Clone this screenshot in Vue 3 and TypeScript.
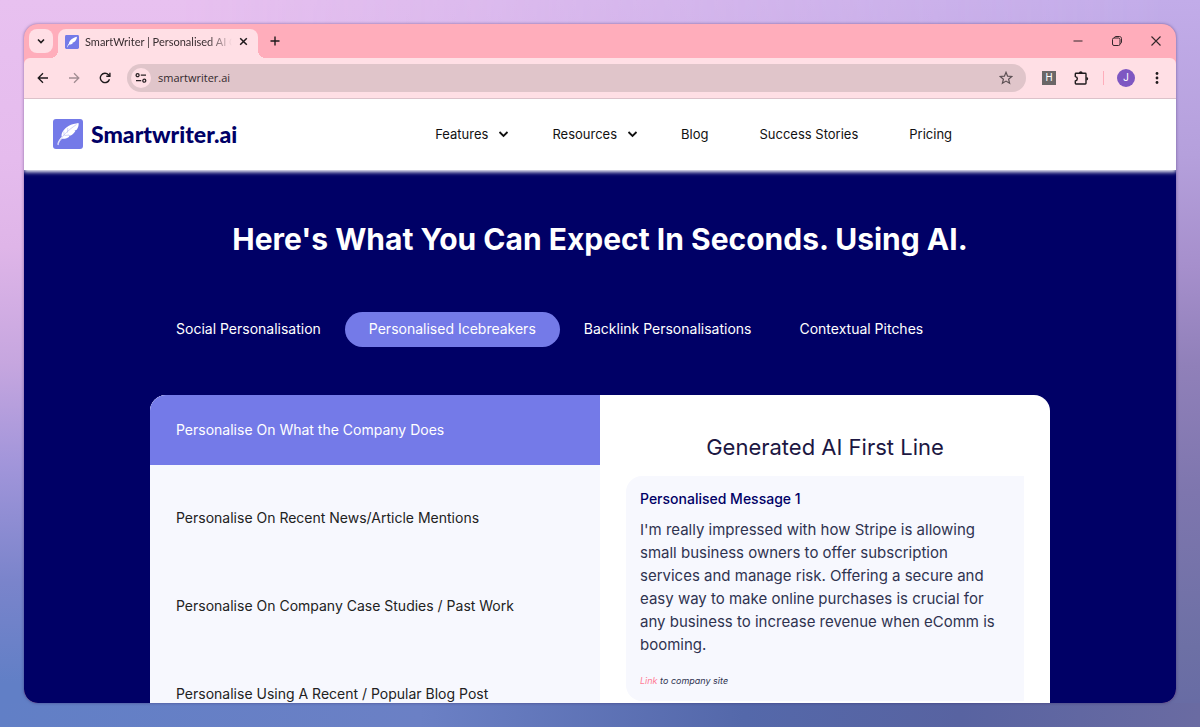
<script setup lang="ts">
import { ref } from 'vue'

interface NavItem {
  label: string
  menu: boolean
}

const address = ref('smartwriter.ai')

const navItems: NavItem[] = [
  { label: 'Features', menu: true },
  { label: 'Resources', menu: true },
  { label: 'Blog', menu: false },
  { label: 'Success Stories', menu: false },
  { label: 'Pricing', menu: false },
]

const categories: string[] = [
  'Social Personalisation',
  'Personalised Icebreakers',
  'Backlink Personalisations',
  'Contextual Pitches',
]
const activeCategory = ref(1)

const options: string[] = [
  'Personalise On What the Company Does',
  'Personalise On Recent News/Article Mentions',
  'Personalise On Company Case Studies / Past Work',
  'Personalise Using A Recent / Popular Blog Post',
]
const activeOption = ref(0)
</script>

<template>
  <div class="desktop">
    <div class="window">
      <div class="titlebar">
        <button class="tab-search" aria-label="Search tabs">
          <svg width="10" height="10" viewBox="0 0 10 10"><path d="M2 3.500l3 3 3-3" fill="none" stroke="#1f1a1c" stroke-width="1.600" /></svg>
        </button>
        <div class="browser-tab">
          <svg class="favicon" viewBox="0 0 30 30">
            <rect width="30" height="30" rx="3" fill="#747ae8" />
            <path d="M4.500 26C5 23 6.500 20 8.500 18C9 12 15 6 25.500 3.500C26 8 23 12.500 19 15.500L16 16L17 17C15 19.500 12.500 20.500 9.500 20.500C7.500 22 6 24.500 5.500 26.500Z" fill="#fff" />
          </svg>
          <span class="tab-title">SmartWriter | Personalised AI C</span>
          <button class="tab-close" aria-label="Close tab">
            <svg width="9" height="9" viewBox="0 0 9 9"><path d="M1.200 1.200l6.600 6.600M7.800 1.200L1.200 7.800" stroke="#1f1a1c" stroke-width="1.500" /></svg>
          </button>
        </div>
        <button class="new-tab" aria-label="New tab">
          <svg width="10" height="10" viewBox="0 0 10 10"><path d="M5 .5v9M.5 5h9" stroke="#1f1a1c" stroke-width="1.400" /></svg>
        </button>
        <div class="window-controls">
          <button aria-label="Minimise">
            <svg width="10" height="10" viewBox="0 0 10 10"><path d="M.5 5h9" stroke="#33262a" /></svg>
          </button>
          <button aria-label="Restore">
            <svg width="10" height="10" viewBox="0 0 10 10" fill="none" stroke="#33262a"><rect x=".5" y="2" width="7.500" height="7.500" rx="1.500" /><path d="M2.500 2V1.800C2.500 1 3 .5 3.800 .5H7.500C8.600 .5 9.500 1.400 9.500 2.500V6C9.500 7 9 7.500 8 7.500" /></svg>
          </button>
          <button aria-label="Close">
            <svg width="10" height="10" viewBox="0 0 10 10"><path d="M.5 .5l9 9M9.500 .5l-9 9" stroke="#33262a" stroke-width="1.100" /></svg>
          </button>
        </div>
      </div>

      <div class="toolbar">
        <button class="tool" aria-label="Back">
          <svg width="12" height="12" viewBox="0 0 12 12" fill="none" stroke="#1f1a1c" stroke-width="1.300"><path d="M11 6H1.500M6 1.200L1.200 6L6 10.800" /></svg>
        </button>
        <button class="tool" aria-label="Forward">
          <svg width="12" height="12" viewBox="0 0 12 12" fill="none" stroke="#a28d93" stroke-width="1.300"><path d="M1 6h9.500M6 1.200L10.800 6L6 10.800" /></svg>
        </button>
        <button class="tool" aria-label="Reload">
          <svg width="12" height="12" viewBox="0 0 12 12" fill="none" stroke="#1f1a1c" stroke-width="1.400"><path d="M10.500 7.300A4.700 4.700 0 1 1 9.500 2.800L10.700 4.200" /><path d="M10.900 .7V4.300H7.300" /></svg>
        </button>
        <div class="address">
          <button class="site-info" aria-label="Site information">
            <svg width="12" height="12" viewBox="0 0 12 12" fill="none" stroke="#2a2225" stroke-width="1.300"><circle cx="2.600" cy="3.200" r="1.500" /><path d="M5.800 3.200H11" /><circle cx="9.300" cy="8.700" r="1.500" /><path d="M1 8.700H6.200" /></svg>
          </button>
          <input v-model="address" type="text" aria-label="Address" />
          <button class="star" aria-label="Bookmark this page">
            <svg width="14" height="14" viewBox="0 0 14 14"><path d="M7 1.300L8.600 5.200L12.800 5.500L9.600 8.200L10.600 12.300L7 10.100L3.400 12.300L4.400 8.200L1.200 5.500L5.400 5.200Z" fill="none" stroke="#5c5054" stroke-width="1.200" /></svg>
          </button>
        </div>
        <button class="ext-badge" aria-label="Extension H">H</button>
        <button class="puzzle" aria-label="Extensions">
          <svg width="16" height="16" viewBox="0 0 16 16"><path d="M3 3.300H12.300Q13 3.300 13 4V13.300Q13 14 12.300 14H3Q2.300 14 2.300 13.300V11C5 10.500 5 7 2.300 6.500V4Q2.300 3.300 3 3.300Z" fill="none" stroke="#1f1a1c" stroke-width="1.400" stroke-linejoin="round" /><path d="M6 3A1.800 1.800 0 0 1 9.600 3ZM13.400 7A1.800 1.800 0 0 1 13.400 10.600Z" fill="#1f1a1c" /></svg>
        </button>
        <span class="separator"></span>
        <button class="profile" aria-label="Profile">J</button>
        <button class="more" aria-label="Browser menu">
          <svg width="4" height="14" viewBox="0 0 4 14" fill="#1f1a1c"><circle cx="2" cy="2.500" r="1.400" /><circle cx="2" cy="7" r="1.400" /><circle cx="2" cy="11.500" r="1.400" /></svg>
        </button>
      </div>

      <div class="page">
        <header class="site-header">
          <a class="brand" href="#">
            <svg class="brand-mark" viewBox="0 0 30 30">
              <rect width="30" height="30" rx="3" fill="#747ae8" />
              <path d="M4.400 25.500C4.500 22.500 6.500 20.500 8.800 17.500L8.500 16.800C8.500 13 11.500 9.500 15.500 7C18.500 5.200 22.500 4.400 25.500 4C26 6 25.300 8.500 23.700 10.800L21.500 11.800L22.300 12.200C21 14 19.500 15.500 17.800 16.400L15.500 16.800L16.500 17.400C14.500 19 12 20 9.200 19.700C7.500 21 6 23 5.400 26.300Z" fill="#fff" />
              <path d="M5 25C9 17 14 12 23.500 5.500M11.200 16.800L10.800 12.500M14.500 13.500L14.800 9M12 16.500L16 16" fill="none" stroke="#b4b7f3" stroke-width=".6" />
            </svg>
            <span>Smartwriter.ai</span>
          </a>
          <nav class="site-nav">
            <template v-for="item in navItems" :key="item.label">
              <button v-if="item.menu" class="nav-menu">
                {{ item.label }}
                <svg width="11" height="8" viewBox="0 0 11 8"><path d="M1.500 2l4 4 4-4" fill="none" stroke="#111" stroke-width="1.800" /></svg>
              </button>
              <a v-else class="nav-link" href="#">{{ item.label }}</a>
            </template>
          </nav>
        </header>

        <main class="showcase">
          <h1>Here's What You Can Expect In Seconds. Using AI.</h1>
          <div class="container">
            <div class="categories" role="tablist">
              <button
                v-for="(category, i) in categories"
                :key="category"
                role="tab"
                :aria-selected="i === activeCategory"
                :class="['category', { active: i === activeCategory }]"
                @click="activeCategory = i"
              >{{ category }}</button>
            </div>
            <div class="card">
              <div class="options">
                <button
                  v-for="(option, i) in options"
                  :key="option"
                  :class="['option', { active: i === activeOption }]"
                  @click="activeOption = i"
                >{{ option }}</button>
              </div>
              <section class="result">
                <h2>Generated AI First Line</h2>
                <article class="message">
                  <h3>Personalised Message 1</h3>
                  <p>I'm really impressed with how Stripe is allowing small business owners to offer subscription services and manage risk. Offering a secure and easy way to make online purchases is crucial for any business to increase revenue when eComm is booming.</p>
                  <small><a href="#">Link</a> to company site</small>
                </article>
              </section>
            </div>
          </div>
        </main>
      </div>
    </div>
  </div>
</template>

<style>
body {
  margin: 0;
  overflow: hidden;
}
</style>

<style scoped>
* {
  box-sizing: border-box;
}

button,
input {
  margin: 0;
  padding: 0;
  border: 0;
  background: none;
  color: inherit;
  font: inherit;
}

button {
  display: flex;
  align-items: center;
  justify-content: center;
  cursor: pointer;
}

a {
  color: inherit;
  text-decoration: none;
}

svg {
  display: block;
  flex: none;
}

.desktop {
  position: relative;
  isolation: isolate;
  display: flex;
  height: 100vh;
  padding: 24px;
  font-family: Inter, "Liberation Sans", sans-serif;
  background:
    linear-gradient(to right, #617fc6, #6b80c5 35%, #5468aa 62%, #5863a1 80%, #6a6ba2) bottom / 100% 24px no-repeat,
    linear-gradient(#e8c1f0, #e5bbed 22%, #dfb5e8 34%, #c6a6df 50%, #a195da 64%, #7a84cb 80%, #617fc6 94%);
}

.desktop::before {
  content: "";
  position: absolute;
  inset: 0 0 24px;
  z-index: -1;
  background: linear-gradient(#c2ace9, #b5a0dc 22%, #a68fcc 38%, #9080b9 52%, #7e76ae 70%, #6d70a5 92%, #686ca4);
  mask-image: linear-gradient(to right, transparent 15%, #000 97%);
}

.window {
  display: flex;
  flex: 1;
  flex-direction: column;
  min-width: 0;
  overflow: hidden;
  border-radius: 14px;
  background: #ffadbb;
  box-shadow: 0 0 3px rgba(40, 20, 80, 0.5);
}

.titlebar {
  display: flex;
  flex: none;
  align-items: center;
  height: 34px;
  padding: 0 1px 0 5px;
}

.tab-search {
  width: 24px;
  height: 24px;
  border-radius: 8px;
  background: #ffdfe5;
}

.browser-tab {
  position: relative;
  display: flex;
  align-items: center;
  align-self: flex-end;
  width: 200px;
  height: 29px;
  margin-left: 5px;
  padding: 0 8px 4px 7px;
  border-radius: 8px 8px 0 0;
  background: #ffdfe5;
}

.browser-tab::before,
.browser-tab::after {
  content: "";
  position: absolute;
  bottom: 0;
  width: 8px;
  height: 8px;
}

.browser-tab::before {
  right: 100%;
  background: radial-gradient(circle at 0 0, transparent 8px, #ffdfe5 8px);
}

.browser-tab::after {
  left: 100%;
  background: radial-gradient(circle at 100% 0, transparent 8px, #ffdfe5 8px);
}

.favicon {
  width: 14px;
  height: 14px;
}

.tab-title {
  flex: 1;
  min-width: 0;
  margin: 0 4px 0 6px;
  color: #382d30;
  font: 11px/16px Lato, "Liberation Sans", sans-serif;
  white-space: nowrap;
  mask-image: linear-gradient(to right, #000 calc(100% - 24px), transparent);
}

.tab-close {
  width: 14px;
  height: 14px;
}

.new-tab {
  width: 24px;
  height: 24px;
  margin-left: 5px;
}

.window-controls {
  display: flex;
  margin-left: auto;
}

.window-controls button {
  width: 39px;
  height: 34px;
}

.toolbar {
  display: flex;
  flex: none;
  align-items: center;
  height: 41px;
  padding: 0 12px 0 3px;
  border-bottom: 1px solid #dcc2ca;
  border-radius: 6px 6px 0 0;
  background: #ffdfe5;
}

.tool {
  width: 31px;
  height: 28px;
}

.address {
  display: flex;
  flex: 1;
  align-items: center;
  min-width: 0;
  height: 28px;
  margin-left: 7px;
  padding: 0 13px 0 4px;
  border-radius: 14px;
  background: #e0c5ca;
}

.site-info {
  flex: none;
  width: 20px;
  height: 20px;
  border-radius: 50%;
  background: #ffdfe5;
}

.address input {
  flex: 1;
  min-width: 0;
  margin-left: 7px;
  outline: 0;
  color: #33292c;
  font: 11px/20px "Open Sans", "Noto Sans", sans-serif;
}

.ext-badge {
  width: 14px;
  height: 14px;
  margin-left: 16px;
  background: #6b6667;
  color: #fff;
  font: 10px/14px Roboto, "Liberation Sans", sans-serif;
}

.puzzle {
  margin-left: 17px;
}

.separator {
  width: 1px;
  height: 14px;
  margin-left: 14px;
  background: #ffadbb;
}

.profile {
  width: 18px;
  height: 18px;
  margin-left: 13px;
  border-radius: 50%;
  background: #7e57c2;
  color: #fff;
  font: 10px/18px Roboto, "Liberation Sans", sans-serif;
}

.more {
  width: 14px;
  height: 20px;
  margin-left: 15px;
}

.page {
  flex: 1;
  min-height: 0;
  overflow: hidden;
  background: #000066;
}

.site-header {
  position: relative;
  display: flex;
  align-items: center;
  height: 71px;
  padding: 0 29px 2px;
  background: #fff;
  box-shadow: 0 2px 4px #fff;
}

.brand {
  display: flex;
  flex: none;
  align-items: center;
  gap: 8px;
  color: #000066;
  font: 900 23px/30px Lato, "Liberation Sans", sans-serif;
}

.brand-mark {
  width: 30px;
  height: 30px;
}

.site-nav {
  display: flex;
  align-items: center;
  gap: 43px;
  margin-left: 198px;
  color: #111;
  font-size: 13px;
  line-height: 20px;
  white-space: nowrap;
}

.nav-menu {
  gap: 10px;
}

.nav-link {
  padding-right: 8px;
}

.showcase {
  padding-top: 49px;
}

h1 {
  margin: 0;
  color: #fff;
  font-size: 30px;
  font-weight: 700;
  line-height: 40px;
  text-align: center;
}

.container {
  max-width: 900px;
  margin: 53px auto 0;
}

.categories {
  display: flex;
  padding-left: 2px;
}

.category {
  height: 35px;
  padding: 0 24px 2px;
  border-radius: 18px;
  color: #fff;
  font-size: 14px;
  white-space: nowrap;
}

.category.active {
  background: #747ae8;
}

.card {
  display: grid;
  grid-template-columns: 1fr 1fr;
  margin-top: 48px;
  overflow: hidden;
  border-radius: 16px;
  background: #fff;
}

.options {
  display: flex;
  flex-direction: column;
  gap: 18px;
  background: #f7f8fe;
}

.option {
  justify-content: flex-start;
  height: 70px;
  padding: 0 26px 1px;
  color: #222;
  font-size: 14px;
  text-align: left;
}

.option.active {
  background: #747ae8;
  color: #fff;
}

.result {
  padding: 36px 26px;
}

h2 {
  margin: 0;
  color: #1c1742;
  font-size: 22px;
  font-weight: 400;
  line-height: 32px;
  text-align: center;
}

.message {
  margin-top: 13px;
  padding: 13px 20px 13px 14px;
  border-radius: 16px 0 0 16px;
  background: #f7f8fe;
}

h3 {
  margin: 0;
  color: #000066;
  font-size: 14px;
  font-weight: 500;
  line-height: 20px;
}

.message p {
  margin: 9px 0 18px;
  color: #2f3350;
  font-size: 15px;
  line-height: 23px;
}

.message small {
  display: block;
  color: #2f3350;
  font-size: 9px;
  font-style: italic;
  line-height: 14px;
}

.message small a {
  color: #ff7d96;
}
</style>
